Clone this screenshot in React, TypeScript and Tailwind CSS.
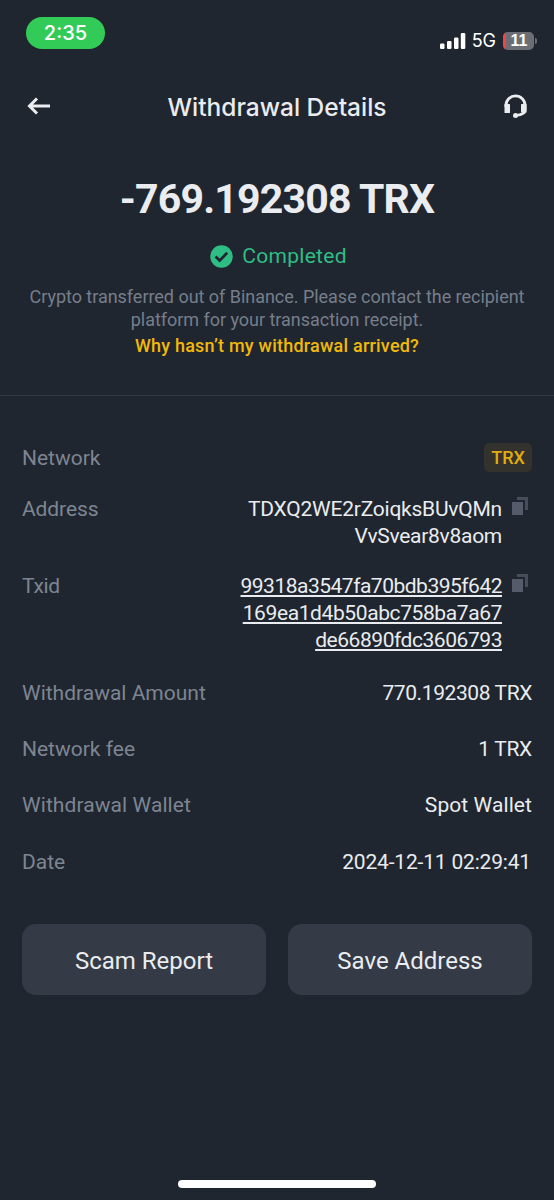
import type { ReactNode } from "react";

function CopyIcon({ className = "" }: { className?: string }) {
  return (
    <svg className={`ml-[10px] mr-[4px] h-[18px] w-4 shrink-0 ${className}`} viewBox="0 0 16 18">
      <path d="M5 0h11v13h-3V3H5z" fill="#474d5a" />
      <rect x="0" y="5" width="11" height="13" fill="#545b6a" />
    </svg>
  );
}

function Row({ label, labelClass = "", className = "", children }: { label: string; labelClass?: string; className?: string; children: ReactNode }) {
  return (
    <div className={`flex items-start justify-between ${className}`}>
      <span className={`text-[#7d8592] ${labelClass}`}>{label}</span>
      {children}
    </div>
  );
}

function StatusBar() {
  return (
    <div className="flex h-[66px] shrink-0 items-start justify-between pl-[26px] pr-[17px] pt-[17px] font-['Inter',sans-serif]">
      <div className="flex h-8 w-[79px] items-center justify-center rounded-full bg-[#33cb57] text-[20px] font-medium leading-8 text-white">2:35</div>
      <div className="flex items-center pt-[14px] text-white">
        <svg className="h-4 w-[26px]" viewBox="0 0 26 16" fill="#fff">
          <rect x="0" y="10.500" width="4.500" height="5.500" rx="1.2" />
          <rect x="7" y="8" width="4.500" height="8" rx="1.2" />
          <rect x="14" y="4.500" width="4.500" height="11.500" rx="1.2" />
          <rect x="20.800" y="0" width="4.500" height="16" rx="1.2" />
        </svg>
        <span className="ml-[6px] text-[18px] leading-5">5G</span>
        <div className="ml-[7px] flex h-[18px] w-[31px] items-center overflow-hidden rounded-[5px] bg-[#6b6f75]">
          <div className="h-full w-[3px] bg-[#f5433f]" />
          <span className="flex-1 pr-[2px] text-center font-['Liberation_Sans',sans-serif] text-[16px] font-bold leading-[18px]">11</span>
        </div>
        <div className="ml-[1px] h-[6px] w-[2px] rounded-r-full bg-[#6b6f75]" />
      </div>
    </div>
  );
}

export default function App() {
  return (
    <div className="flex h-[1200px] w-[554px] flex-col bg-[#20262f] font-['Roboto',sans-serif] text-[#eaecef]">
      <StatusBar />

      <header className="flex h-20 shrink-0 items-center justify-between pl-[26px] pr-[26px]">
        <svg className="h-[18px] w-6" viewBox="0 0 24 18" fill="none" stroke="#eaecef" strokeWidth="3">
          <path d="M3.500 9H24M11 1.500L3.500 9l7.500 7.500" />
        </svg>
        <h1 className="pt-[2px] font-['Inter',sans-serif] text-[24.500px] font-medium leading-8">Withdrawal Details</h1>
        <svg className="h-6 w-6" viewBox="0 0 24 24">
          <path d="M1.900 13v-1.500a9.600 9.600 0 0 1 19.200 0V16q0 4.500-9 5.300" fill="none" stroke="#eaecef" strokeWidth="2.800" />
          <rect x="0.500" y="10" width="5.500" height="9" rx="0.5" fill="#eaecef" />
          <rect x="17" y="10" width="5.500" height="8.500" rx="0.5" fill="#eaecef" />
          <circle cx="11.500" cy="21.400" r="2.500" fill="#eaecef" />
        </svg>
      </header>

      <section className="flex h-[250px] shrink-0 flex-col items-center border-b border-[#333b47] pt-[29px] text-center">
        <div className="text-[41px] font-bold leading-[48px] tracking-[-0.8px]">-769.192308 TRX</div>
        <div className="mt-5 flex items-center gap-[9px] pl-[3px] text-[#2ebd85]">
          <svg className="h-[23px] w-[23px]" viewBox="0 0 23 23">
            <circle cx="11.500" cy="11.500" r="11.200" fill="#2ebd85" />
            <path d="M5.500 11.500l4.200 4 7.500-7.700" fill="none" stroke="#20262f" strokeWidth="2.700" />
          </svg>
          <span className="pt-px text-[21px] leading-[25px] tracking-[0.3px]">Completed</span>
        </div>
        <p className="mt-4 text-[18px] leading-[23px] tracking-[-0.03px] text-[#767e8b]">
          Crypto transferred out of Binance. Please contact the recipient
          <br />
          platform for your transaction receipt.
        </p>
        <a className="mt-[3px] text-[18px] font-medium leading-[24px] tracking-[0.22px] text-[#f0b90b]">Why hasn’t my withdrawal arrived?</a>
      </section>

      <section className="flex shrink-0 flex-col px-[22px] pt-[47px] text-[21px] leading-[27px]">
        <Row label="Network" labelClass="pt-[2px]" className="h-[53px]">
          <span className="flex h-[29px] w-12 items-center justify-center rounded-[5px] bg-[#33322c] text-[18px] font-medium text-[#e0ac0e]">TRX</span>
        </Row>
        <Row label="Address" labelClass="tracking-[-0.1px]" className="h-[77px]">
          <div className="flex items-start">
            <div className="flex flex-col items-end">
              <span className="tracking-[-0.23px]">TDXQ2WE2rZoiqksBUvQMn</span>
              <span className="tracking-[-0.28px]">VvSvear8v8aom</span>
            </div>
            <CopyIcon className="mt-px" />
          </div>
        </Row>
        <Row label="Txid" labelClass="tracking-[-0.3px]" className="h-[107px]">
          <div className="flex items-start">
            <div className="flex flex-col items-end underline decoration-[1.5px] underline-offset-[2px]">
              <span className="tracking-[-0.5px]">99318a3547fa70bdb395f642</span>
              <span className="tracking-[-0.4px]">169ea1d4b50abc758ba7a67</span>
              <span className="tracking-[-0.45px]">de66890fdc3606793</span>
            </div>
            <CopyIcon className="mt-px" />
          </div>
        </Row>
        <Row label="Withdrawal Amount" className="h-14">
          <span className="tracking-[-0.4px]">770.192308 TRX</span>
        </Row>
        <Row label="Network fee" className="h-14">
          <span className="tracking-[-0.3px]">1 TRX</span>
        </Row>
        <Row label="Withdrawal Wallet" labelClass="tracking-[0.08px]" className="h-14">
          <span className="tracking-[0.08px]">Spot Wallet</span>
        </Row>
        <Row label="Date" className="h-[76px] pt-px">
          <span className="pr-px tracking-[-0.18px]">2024-12-11 02:29:41</span>
        </Row>
      </section>

      <div className="grid shrink-0 grid-cols-2 gap-[22px] px-[22px] text-[24px] leading-8">
        <button className="h-[71px] rounded-[14px] bg-[#343b47] pt-[2px]">Scam Report</button>
        <button className="h-[71px] rounded-[14px] bg-[#343b47] pt-[2px]">Save Address</button>
      </div>

      <div className="mb-3 mt-auto h-2 w-[198px] self-center rounded-full bg-white" />
    </div>
  );
}
